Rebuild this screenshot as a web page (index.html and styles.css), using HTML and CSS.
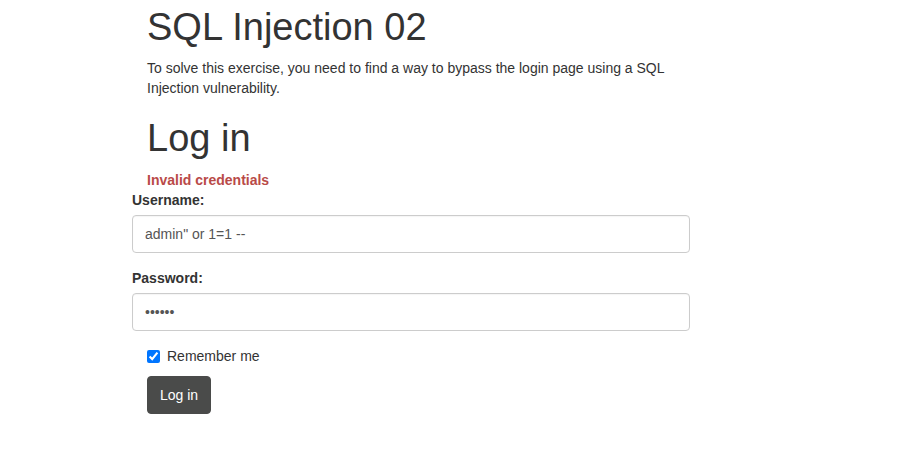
FILE: index.html
```html
<!DOCTYPE html>
<html lang="en">
<head>
<meta charset="utf-8">
<title>SQL Injection 02</title>
<link rel="stylesheet" href="styles.css">
</head>
<body>
<main class="page">
  <section class="intro">
    <h1 class="title">SQL Injection 02</h1>
    <p class="lead">To solve this exercise, you need to find a way to bypass the login page using a SQL Injection vulnerability.</p>
    <h1 class="title title-login">Log in</h1>
  </section>
  <form class="login" onsubmit="return false">
    <div class="error">Invalid credentials</div>
    <div class="group">
      <label class="label" for="username">Username:</label>
      <input class="control" id="username" type="text" value="admin&quot; or 1=1 --">
    </div>
    <div class="group">
      <label class="label" for="password">Password:</label>
      <input class="control" id="password" type="password" value="123456">
    </div>
    <label class="check">
      <input class="check-box" type="checkbox" checked>
      <span>Remember me</span>
    </label>
    <button class="btn" type="submit">Log in</button>
  </form>
</main>
</body>
</html>
```

FILE: styles.css
```css
html, body {
  margin: 0;
  padding: 0;
  background: #fff;
}

body {
  font-family: "Liberation Sans", Arial, Helvetica, sans-serif;
  font-size: 14px;
  line-height: 20px;
  color: #333;
}

.page {
  width: 558px;
  margin-left: 132px;
  padding-top: 7px;
}

.intro {
  padding: 0 15px;
}

.title {
  font-size: 38px;
  font-weight: 400;
  line-height: 41px;
  margin: 0 0 10px;
  color: #333;
}

.title-login {
  margin-top: 20px;
  margin-bottom: 11px;
}

.lead {
  margin: 0;
}

.login {
  display: flex;
  flex-direction: column;
}

.error {
  padding-left: 15px;
  color: #b94a48;
  font-weight: 700;
}

.group {
  display: flex;
  flex-direction: column;
  margin-bottom: 15px;
}

.label {
  font-weight: 700;
  margin-bottom: 5px;
}

.control {
  box-sizing: border-box;
  width: 100%;
  height: 38px;
  margin: 0;
  padding: 6px 12px;
  font-family: inherit;
  font-size: 14px;
  line-height: 24px;
  color: #555;
  background: #fff;
  border: 1px solid #ccc;
  border-radius: 4px;
  box-shadow: inset 0 1px 1px rgba(0,0,0,0.04);
  outline: none;
}

.check {
  display: flex;
  align-items: center;
  padding-left: 15px;
  margin-bottom: 10px;
  height: 20px;
}

.check-box {
  width: 13px;
  height: 13px;
  margin: 0 7px 0 0;
}

.btn {
  align-self: flex-start;
  margin-left: 15px;
  box-sizing: border-box;
  height: 38px;
  padding: 6px 12px;
  font-family: inherit;
  font-size: 14px;
  line-height: 24px;
  color: #fff;
  background: #4a4b4a;
  border: 1px solid #4a4b4a;
  border-radius: 4px;
  cursor: pointer;
}
```
